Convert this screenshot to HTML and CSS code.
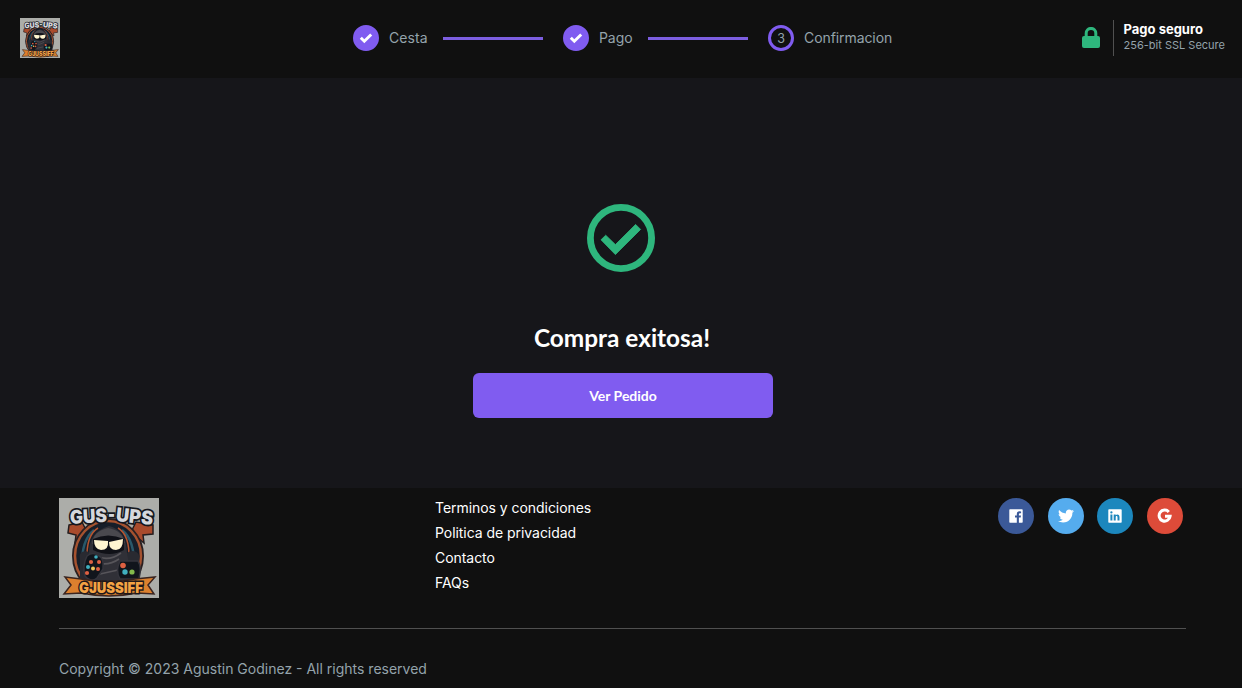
FILE: index.html
```html
<!DOCTYPE html>
<html lang="es">
<head>
<meta charset="utf-8">
<title>Compra exitosa</title>
<link rel="stylesheet" href="styles.css">
</head>
<body>
<svg class="sprite" aria-hidden="true">
  <symbol id="logo" viewBox="0 0 100 100" overflow="visible">
    <rect width="100" height="100" fill="#acada9"/>
    <path d="M10 27l13-3 5 10-12 11 1-8-8-2zM94 27l-17-3-5 10 13 11-1-8 10-1z" fill="#a94b2c" stroke="#241d1e" stroke-width="1.5"/>
    <ellipse cx="49" cy="58" rx="35" ry="37" fill="#171e29" stroke="#2a2021" stroke-width="2"/>
    <ellipse cx="49" cy="58" rx="33" ry="35" fill="none" stroke="#a5522f" stroke-width="2.5"/>
    <path d="M23 70q-1-28 12-38M75 70q1-28-12-38" fill="none" stroke="#29586a" stroke-width="2.5"/>
    <path d="M28 62q-1-25 11-32M70 62q1-25-11-32" fill="none" stroke="#b65430" stroke-width="1.5"/>
    <path d="M21 86V62q-2-8 5-9 5 0 7 7 14-6 32 0 2-7 9-7 8 1 6 10l-1 23z" fill="#292a31"/>
    <path d="M30 55q0-21 20-27 17 4 18 27l5 29H27z" fill="#303037"/>
    <path d="M33 46q1-13 16-16 14 2 17 15-16-8-33 1z" fill="#4a494e"/>
    <path d="M34 41q15-7 31 0v11q-14 8-31 0z" fill="#101117"/>
    <path d="M35 42l14 1q1 9-7 9-7-1-7-10zM50 44l14-3q0 11-7 11-7 0-7-8z" fill="#fff5d0"/>
    <path d="M37 58q13 6 25-3M38 65q12 3 22-4M41 76l18-4" fill="none" stroke="#57555a" stroke-width="1.6"/>
    <path d="M28 58q6-5 12 0 5 2 4 13l-6 9q-6 5-12-2-3-10 2-20zM61 63h18q4 6 1 18H61q-5-8 0-18z" fill="#11151c" stroke="#34343c" stroke-width="1.5"/>
    <g fill="#dc6042"><circle cx="32" cy="64" r="2.1"/><circle cx="40" cy="64" r="2"/><circle cx="28" cy="75" r="2.1"/><circle cx="39" cy="71" r="2"/><circle cx="64" cy="67.5" r="2.8"/></g>
    <g fill="#40b0c0"><circle cx="37" cy="59" r="1.8"/><circle cx="29" cy="69" r="2"/><circle cx="66" cy="74" r="2.7"/></g>
    <circle cx="34" cy="70.5" r="2" fill="#eec45c"/><circle cx="73" cy="74" r="2.6" fill="#83b94c"/>
    <path d="M6 79l16 2q27 5 54 0l20-2-7 8 6 9-17-1q-28 6-56 0l-17 1 7-9z" fill="#dc802e" stroke="#3b2520" stroke-width="1.5"/>
    <g class="logo-top"><text x="11" y="25" textLength="37" lengthAdjust="spacingAndGlyphs" transform="rotate(-3 28 20)">GUS</text><text x="49" y="23" textLength="7" lengthAdjust="spacingAndGlyphs">-</text><text x="57" y="25" textLength="37" lengthAdjust="spacingAndGlyphs" transform="rotate(6 75 20)">UPS</text></g>
    <text class="logo-bottom" x="20" y="95" textLength="64" lengthAdjust="spacingAndGlyphs">GJUSSIFF</text>
  </symbol>
  <symbol id="check" viewBox="0 0 14 12"><path d="M1.8 5.8l3.5 3.5L12.2 2.5" fill="none" stroke="#fff" stroke-width="2.9"/></symbol>
</svg>
<header class="header">
  <svg class="logo-small"><use href="#logo"/></svg>
  <ol class="steps">
    <li class="step first"><span class="dot done"><svg width="14" height="12"><use href="#check"/></svg></span><span class="label">Cesta</span></li>
    <li class="line"></li>
    <li class="step second"><span class="dot done"><svg width="14" height="12"><use href="#check"/></svg></span><span class="label">Pago</span></li>
    <li class="line"></li>
    <li class="step"><span class="dot">3</span><span class="label">Confirmacion</span></li>
  </ol>
  <div class="secure">
    <svg width="20" height="22" viewBox="0 0 20 22"><path d="M5.2 10V6.2a4.8 4.8 0 0 1 9.6 0V10" fill="none" stroke="#2eb67d" stroke-width="3"/><rect x="1" y="9" width="18" height="12" rx="2" fill="#2eb67d"/></svg>
    <div class="secure-text"><strong>Pago seguro</strong><span>256-bit SSL Secure</span></div>
  </div>
</header>
<main class="main">
  <svg class="success" width="68" height="68" viewBox="0 0 68 68"><circle cx="34" cy="34" r="30.6" fill="none" stroke="#2eb67d" stroke-width="6.8"/><path d="M14 35.8l4.7-4.6 9.7 9.4 20.2-20.2 5 5-25.2 25.2z" fill="#2eb67d" stroke="#2eb67d" stroke-width=".8" stroke-linejoin="round"/></svg>
  <h1 class="title">Compra exitosa!</h1>
  <button class="button">Ver Pedido</button>
</main>
<footer class="footer">
  <div class="footer-top">
    <svg class="logo-large"><use href="#logo"/></svg>
    <nav class="links"><a>Terminos y condiciones</a><a>Politica de privacidad</a><a>Contacto</a><a>FAQs</a></nav>
    <div class="social">
      <span class="circle facebook"><svg width="14" height="14" viewBox="0 0 14 14"><path fill="#fff" fill-rule="evenodd" d="M1 .3h12q.7 0 .7.7v12q0 .7-.7.7H9.9V8.5h1.8l.3-2H9.9V5.2q0-1 1.1-1h1.1V2.4l-1.6-.1Q7.8 2.3 7.8 5v1.5H6v2h1.8v5.2H1q-.7 0-.7-.7V1Q.3.3 1 .3z"/></svg></span>
      <span class="circle twitter"><svg width="16" height="16" viewBox="0 0 512 512"><path fill="#fff" d="M459.37 151.716c.325 4.548.325 9.097.325 13.645 0 138.72-105.583 298.558-298.558 298.558-59.452 0-114.68-17.219-161.137-47.106 8.447.974 16.568 1.299 25.34 1.299 49.055 0 94.213-16.568 130.274-44.832-46.132-.975-84.792-31.188-98.112-72.772 6.498.974 12.995 1.624 19.818 1.624 9.421 0 18.843-1.3 27.614-3.573-48.081-9.747-84.143-51.98-84.143-102.985v-1.299c13.969 7.797 30.214 12.67 47.431 13.319-28.264-18.843-46.781-51.005-46.781-87.391 0-19.492 5.197-37.36 14.294-52.954 51.655 63.675 129.3 105.258 216.365 109.807-1.624-7.797-2.599-15.918-2.599-24.04 0-57.828 46.782-104.934 104.934-104.934 30.213 0 57.502 12.67 76.67 33.137 23.715-4.548 46.456-13.32 66.599-25.34-7.798 24.366-24.366 44.833-46.132 57.827 21.117-2.273 41.584-8.122 60.426-16.243-14.292 20.791-32.161 39.308-52.628 54.253z"/></svg></span>
      <span class="circle linkedin"><svg width="14" height="14" viewBox="0 0 14 14"><path fill="#fff" fill-rule="evenodd" d="M1 .3h12q.7 0 .7.7v12q0 .7-.7.7H1q-.7 0-.7-.7V1Q.3.3 1 .3zM2.4 5.5v6h2v-6zM3.4 2.3a1.15 1.15 0 1 0 0 2.3 1.15 1.15 0 0 0 0-2.3zM5.7 5.5v6h2V8.4c0-1.8 1.8-1.7 1.8 0v3.1h2V8c0-3-2.8-3.2-3.8-1.7v-.8z"/></svg></span>
      <span class="circle google"><svg width="16" height="16" viewBox="0 0 16 16"><path d="M11.8 4A5.5 5.5 0 1 0 13.1 8.3H8" fill="none" stroke="#fff" stroke-width="3"/></svg></span>
    </div>
  </div>
  <p class="copyright">Copyright © 2023 Agustin Godinez - All rights reserved</p>
</footer>
</body>
</html>
```
FILE: styles.css
```css
* { box-sizing: border-box; }
body { margin: 0; background: #101010; color: #fff; font-family: Inter, sans-serif; font-size: 14px; }
.sprite { position: absolute; width: 0; height: 0; }
.header { height: 78px; padding: 0 17px 0 20px; display: grid; grid-template-columns: 333px 1fr auto; align-items: center; background: #101010; }
.header > * { margin-bottom: 2px; }
.logo-small { display: block; width: 40px; height: 40px; overflow: visible; }
.logo-large { display: block; width: 100px; height: 100px; overflow: visible; }
.logo-top { font: 900 19px Inter, sans-serif; fill: #d5d7dc; stroke: #15171e; stroke-width: 3.5px; paint-order: stroke; }
.logo-bottom { font: 900 15px Inter, sans-serif; fill: #f4a344; stroke: #20181a; stroke-width: 3px; paint-order: stroke; }
.steps { display: flex; align-items: center; list-style: none; padding: 0; margin-top: 0; color: #94a3ab; }
.step { display: flex; align-items: center; gap: 10px; }
.first { width: 75px; }
.second { width: 70px; }
.label { letter-spacing: -.08px; padding-bottom: 1px; }
.first .label { letter-spacing: .08px; }
.dot { width: 26px; height: 26px; border: 3px solid #805cf0; border-radius: 50%; display: flex; align-items: center; justify-content: center; font-size: 12.5px; }
.done { background: #805cf0; }
.line { width: 100px; height: 3px; margin: 0 20px 0 15px; background: #7c5ee0; }
.secure { display: flex; align-items: center; gap: 12px; }
.secure-text { height: 36px; padding: 0 0 4px 10px; border-left: 1px solid #505050; display: flex; flex-direction: column; justify-content: center; }
.secure-text strong { font-size: 13px; line-height: 17px; letter-spacing: 0; }
.secure-text span { font-size: 11px; line-height: 14px; color: #94a3ab; }
.main { height: 410px; padding: 126px 0 0 0; background: #16161a; display: flex; flex-direction: column; align-items: center; }
.success { flex: none; }
.title { margin: 50px 0 19px 2px; font: 700 24.4px/32px Lato, sans-serif; }
.button { width: 300px; height: 45px; margin-left: 4px; border: 0; border-radius: 6px; background: #805cf0; color: #fff; font: 700 14px Lato, sans-serif; }
.footer { height: 200px; padding: 10px 56px 0 59px; }
.footer-top { height: 131px; border-bottom: 1px solid #505050; display: grid; grid-template-columns: 376px 1fr auto; align-items: start; }
.links { display: flex; flex-direction: column; gap: 5px; line-height: 20px; letter-spacing: -.05px; }
.social { display: flex; gap: 13.6px; padding-right: 3px; }
.circle { width: 36px; height: 36px; border-radius: 50%; display: flex; align-items: center; justify-content: center; }
.facebook { background: #3b5998; }
.twitter { background: #55acee; }
.linkedin { background: #1c87bd; }
.google { background: #dd4b39; }
.copyright { margin: 30px 0 0; line-height: 20px; color: #94a3ab; }
```
